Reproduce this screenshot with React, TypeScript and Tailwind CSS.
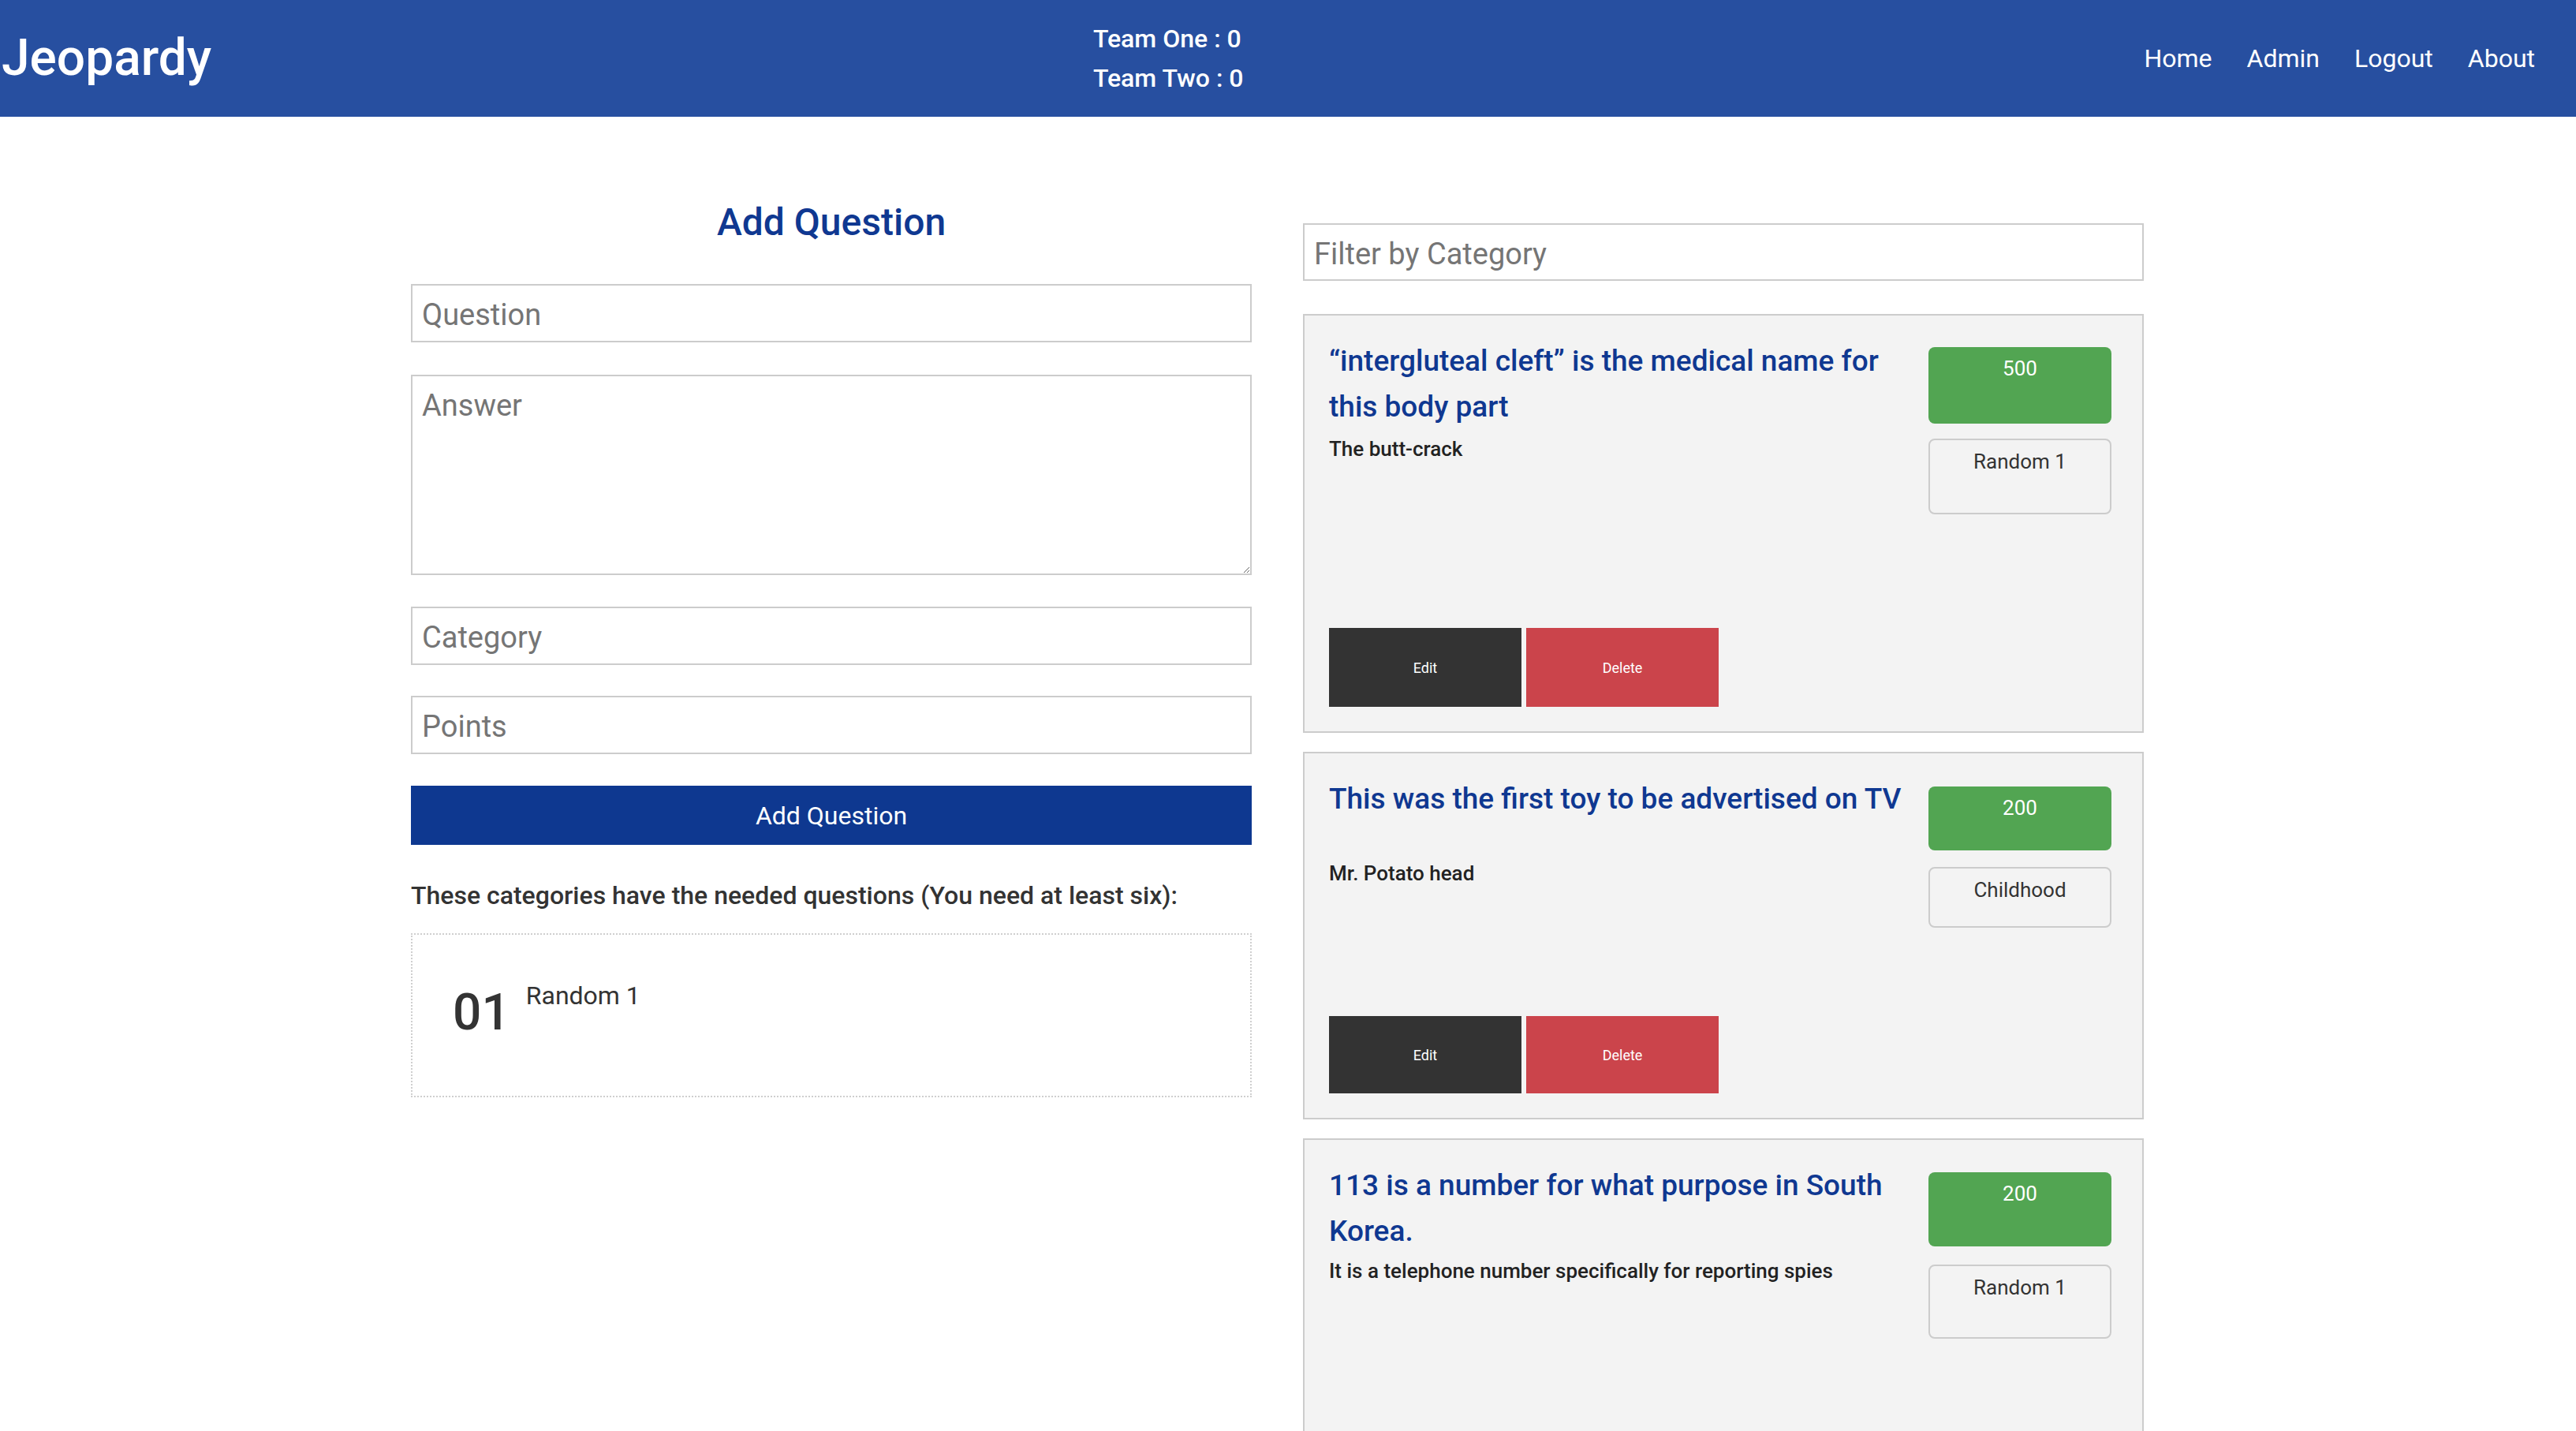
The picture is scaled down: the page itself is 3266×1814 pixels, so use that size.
import React from 'react';

interface Question {
  title: string;
  answer: string;
  points: number;
  category: string;
  answerMt: string;
  pointsMt: string;
  pointsH: string;
  catMt: string;
  catH: string;
  actionsMt: string;
  actionsH: string;
}

const questions: Question[] = [
  {
    title: '“intergluteal cleft” is the medical name for this body part',
    answer: 'The butt-crack',
    points: 500,
    category: 'Random 1',
    answerMt: 'mt-[10px]',
    pointsMt: 'mt-[11px]',
    pointsH: 'h-[97px]',
    catMt: 'mt-[19px]',
    catH: 'h-[96px]',
    actionsMt: 'mt-[144px]',
    actionsH: 'h-[100px]',
  },
  {
    title: 'This was the first toy to be advertised on TV',
    answer: 'Mr. Potato head',
    points: 200,
    category: 'Childhood',
    answerMt: 'mt-[51px]',
    pointsMt: 'mt-[13px]',
    pointsH: 'h-[81px]',
    catMt: 'mt-[21px]',
    catH: 'h-[77px]',
    actionsMt: 'mt-[112px]',
    actionsH: 'h-[98px]',
  },
  {
    title: '113 is a number for what purpose in South Korea.',
    answer: 'It is a telephone number specifically for reporting spies',
    points: 200,
    category: 'Random 1',
    answerMt: 'mt-[7px]',
    pointsMt: 'mt-[12px]',
    pointsH: 'h-[94px]',
    catMt: 'mt-[23px]',
    catH: 'h-[94px]',
    actionsMt: 'mt-[144px]',
    actionsH: 'h-[100px]',
  },
];

function Header() {
  return (
    <header className="flex h-[148px] items-center justify-between bg-[#274fa0] text-white">
      <div className="pl-[2px] text-[64px] font-medium leading-none">Jeopardy</div>
      <div className="pr-[24px] text-[32px] font-medium leading-[50px]">
        <div>Team One : 0</div>
        <div>Team Two : 0</div>
      </div>
      <nav className="flex gap-[44px] pr-[52px] text-[32px]">
        <a>Home</a>
        <a>Admin</a>
        <a>Logout</a>
        <a>About</a>
      </nav>
    </header>
  );
}

function AddQuestionForm() {
  const inputCls =
    'h-[74px] w-full border-2 border-[#cccccc] bg-white px-[12px] pt-[3px] text-[38px] text-[#333] outline-none placeholder:text-[#757575]';
  return (
    <div className="flex w-[1066px] flex-col pt-[105px]">
      <h2 className="text-center text-[48px] font-medium leading-[58px] text-[#0f3891]">Add Question</h2>
      <input className={`mt-[49px] ${inputCls}`} placeholder="Question" />
      <textarea
        className="mt-[41px] h-[254px] w-full border-2 border-[#cccccc] bg-white px-[12px] pt-[9px] text-[38px] text-[#333] outline-none placeholder:text-[#757575]"
        placeholder="Answer"
      />
      <input className={`mt-[40px] ${inputCls}`} placeholder="Category" />
      <input className={`mt-[39px] ${inputCls}`} placeholder="Points" />
      <button className="mt-[40px] h-[75px] w-full bg-[#0e3890] text-[32px] text-white">Add Question</button>
      <p className="mt-[44px] text-[32px] font-medium leading-[40px] text-[#333]">
        These categories have the needed questions (You need at least six):
      </p>
      <div className="mt-[28px] flex h-[208px] items-start border-2 border-dotted border-[#cfcfcf] pl-[51px] pt-[61px] text-[#333]">
        <span className="mt-[6px] text-[64px] font-medium leading-[64px]">01</span>
        <span className="ml-[20px] text-[32px] leading-[32px]">Random 1</span>
      </div>
    </div>
  );
}

function QuestionCard({ q }: { q: Question }) {
  return (
    <div className="border-2 border-[#cccccc] bg-[#f3f3f3] px-[31px] pt-[29px] pb-[31px]">
      <div className="flex gap-x-[15px]">
        <div className="w-[745px]">
          <h3 className="text-[37px] font-medium leading-[58px] text-[#0f3891]">{q.title}</h3>
          <p className={`${q.answerMt} text-[26px] font-medium leading-[28px] text-[#222]`}>{q.answer}</p>
        </div>
        <div className="flex w-[232px] flex-col">
          <div className={`${q.pointsMt} ${q.pointsH} rounded-[8px] bg-[#52a552] pt-[12px] text-center text-[26px] leading-[30px] text-white`}>
            {q.points}
          </div>
          <div className={`${q.catMt} ${q.catH} rounded-[8px] border-2 border-[#cccccc] pt-[12px] text-center text-[26px] leading-[30px] text-[#333]`}>
            {q.category}
          </div>
        </div>
      </div>
      <div className={`${q.actionsMt} flex gap-[6px]`}>
        <button className={`${q.actionsH} w-[244px] bg-[#333333] text-[18px] text-white`}>Edit</button>
        <button className={`${q.actionsH} w-[244px] bg-[#cb444b] text-[18px] text-white`}>Delete</button>
      </div>
    </div>
  );
}

function QuestionList() {
  return (
    <div className="flex w-[1066px] flex-col pt-[135px]">
      <input
        className="h-[73px] w-full border-2 border-[#cccccc] bg-white px-[12px] pt-[4px] text-[38px] text-[#333] outline-none placeholder:text-[#757575]"
        placeholder="Filter by Category"
      />
      <div className="mt-[42px] flex flex-col gap-[24px]">
        {questions.map((q, i) => (
          <QuestionCard key={i} q={q} />
        ))}
      </div>
    </div>
  );
}

export default function App() {
  return (
    <div className="h-[1814px] overflow-hidden bg-white font-[Roboto,sans-serif]">
      <Header />
      <main className="flex gap-[65px] pl-[521px]">
        <AddQuestionForm />
        <QuestionList />
      </main>
    </div>
  );
}
